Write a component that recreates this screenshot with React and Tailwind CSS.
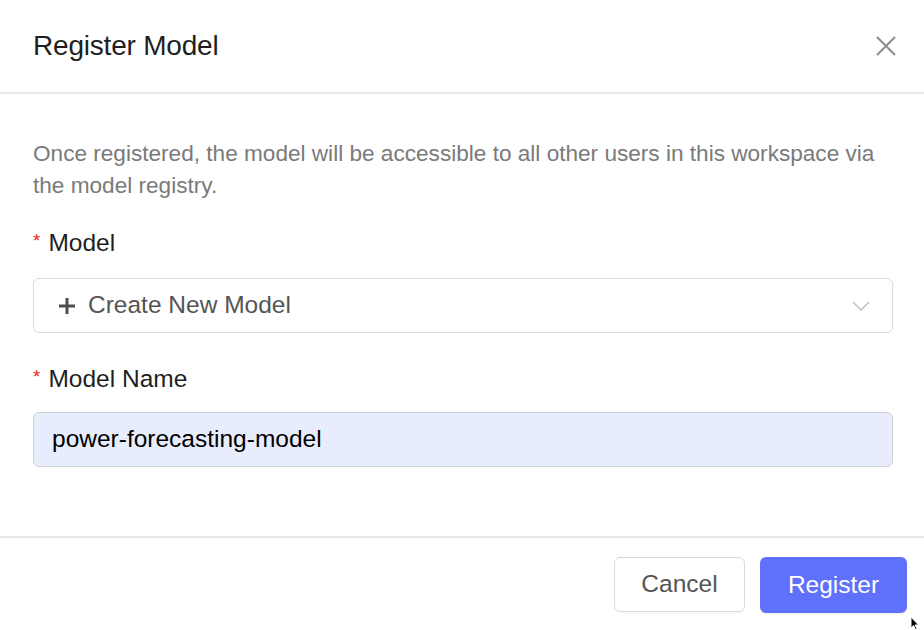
export default function App() {
  return (
    <div className="relative w-[924px] h-[630px] bg-white overflow-hidden" style={{ fontFamily: '"Liberation Sans", Arial, sans-serif' }}>
      {/* Header */}
      <div className="flex items-center justify-between h-[94px] pl-[33px] pr-[27px] border-b-2 border-[#e8e8e8]">
        <h2 className="text-[28px] text-[#1f1f1f] tracking-[-0.2px]">Register Model</h2>
        <svg width="22" height="22" viewBox="0 0 22 22" className="text-[#8c8c8c]">
          <path d="M2 2L20 20M20 2L2 20" stroke="currentColor" strokeWidth="2" fill="none" />
        </svg>
      </div>

      {/* Body */}
      <div className="pl-[33px] pr-[31px] pt-[44px]">
        <p className="text-[22.6px] leading-[32px] text-[#7a7a7a]">
          Once registered, the model will be accessible to all other users in this workspace via the model registry.
        </p>

        <label className="flex items-center mt-[25px] h-[32px] text-[24.5px] text-[#1f1f1f]">
          <span className="text-[#f5222d] text-[19px] mr-[8px] -mt-[4px]">*</span>
          Model
        </label>
        <div className="mt-[19px] h-[55px] flex items-center justify-between pl-[24px] pr-[22px] border-[1.5px] border-[#d9d9d9] rounded-[6px]">
          <div className="flex items-center gap-[12px] text-[24.5px] text-[#555]">
            <svg width="18" height="18" viewBox="0 0 18 18">
              <path d="M9 1V17M1 9H17" stroke="#4d4d4d" strokeWidth="3" fill="none" />
            </svg>
            Create New Model
          </div>
          <svg width="18" height="10" viewBox="0 0 18 10">
            <path d="M1 1L9 9L17 1" stroke="#bfbfbf" strokeWidth="1.5" fill="none" />
          </svg>
        </div>

        <label className="flex items-center mt-[30px] h-[32px] text-[24.5px] text-[#1f1f1f]">
          <span className="text-[#f5222d] text-[19px] mr-[8px] -mt-[4px]">*</span>
          Model Name
        </label>
        <div className="mt-[17px] h-[55px] flex items-center px-[18px] bg-[#e8edfd] border-[1.5px] border-[#cfcfd6] rounded-[6px] text-[24.5px] text-black">
          power-forecasting-model
        </div>
      </div>

      {/* Footer */}
      <div className="absolute left-0 right-0 top-[536px] border-t-2 border-[#e8e8e8]">
        <div className="flex justify-end gap-[15px] pr-[17px] pt-[19px]">
          <button className="w-[131px] h-[55px] rounded-[6px] border-[1.5px] border-[#d9d9d9] bg-white text-[24.5px] text-[#555] shadow-[0_2px_0_rgba(0,0,0,0.02)]">
            Cancel
          </button>
          <button className="w-[147px] h-[56px] rounded-[6px] bg-[#5f71fa] text-[24.5px] text-white shadow-[0_2px_0_rgba(0,0,0,0.04)]">
            Register
          </button>
        </div>
      </div>

      {/* Mouse cursor */}
      <svg className="absolute left-[910px] top-[616px]" width="10" height="14" viewBox="0 0 10 14">
        <path d="M1 1L1 12L3.5 9.5L5.5 13.5L7 12.8L5 9H8.5Z" fill="black" stroke="white" strokeWidth="1" />
      </svg>
    </div>
  )
}
